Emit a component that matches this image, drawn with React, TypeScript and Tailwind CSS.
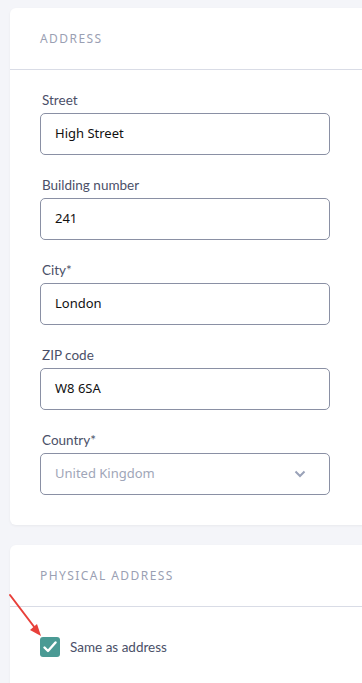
import React from 'react';

const labelFont = { fontFamily: "'Lato', 'Noto Sans', sans-serif" };
const inputFont = { fontFamily: "'Noto Sans', 'Open Sans', sans-serif" };

function Field({ label, value }: { label: string; value: string }) {
  return (
    <div className="flex flex-col">
      <label className="pl-[2px] text-[13.5px] leading-[16px] text-[#4b5068] mb-[5px]" style={labelFont}>
        {label}
      </label>
      <div
        className="w-[290px] h-[42px] rounded-[5px] border border-[#8a90a4] bg-white flex items-center px-[14px] text-[13px] text-[#111]"
        style={inputFont}
      >
        {value}
      </div>
    </div>
  );
}

function CardHeader({ title }: { title: string }) {
  return (
    <div className="h-[62px] border-b border-[#d9dce6] flex items-center px-[30px]">
      <span className="text-[12px] tracking-[0.12em] text-[#9aa0b3]" style={inputFont}>
        {title}
      </span>
    </div>
  );
}

export default function App() {
  return (
    <div className="relative w-[362px] h-[683px] overflow-hidden bg-[#f4f5f9]">
      <div className="pt-[8px] pl-[10px] flex flex-col gap-[20px]">
        <div className="w-[380px] bg-white rounded-[6px] shadow-[0_1px_3px_rgba(0,0,0,0.05)]">
          <CardHeader title="ADDRESS" />
          <div className="px-[30px] pt-[22px] pb-[30px] flex flex-col gap-[22px]">
            <Field label="Street" value="High Street" />
            <Field label="Building number" value="241" />
            <Field label="City*" value="London" />
            <Field label="ZIP code" value="W8 6SA" />
            <div className="flex flex-col">
              <label className="pl-[2px] text-[13.5px] leading-[16px] text-[#4b5068] mb-[5px]" style={labelFont}>
                Country*
              </label>
              <div
                className="w-[290px] h-[42px] rounded-[5px] border border-[#8a90a4] bg-white flex items-center justify-between px-[14px] text-[13px] text-[#a0a6b8]"
                style={inputFont}
              >
                <span>United Kingdom</span>
                <svg width="12" height="8" viewBox="0 0 12 8" className="mr-[9px]">
                  <path d="M1.5 1.5 L6 6 L10.5 1.5" fill="none" stroke="#9aa2b8" strokeWidth="2" />
                </svg>
              </div>
            </div>
          </div>
        </div>

        <div className="w-[380px] h-[200px] bg-white rounded-[6px] shadow-[0_1px_3px_rgba(0,0,0,0.05)]">
          <CardHeader title="PHYSICAL ADDRESS" />
          <div className="px-[30px] pt-[30px] flex items-center gap-[10px]">
            <div className="w-[20px] h-[20px] rounded-[3px] bg-[#4a9a94] flex items-center justify-center">
              <svg width="14" height="12" viewBox="0 0 14 12">
                <path d="M1.5 6.5 L5 10 L12.5 1.5" fill="none" stroke="#ffffff" strokeWidth="2.4" strokeLinecap="round" strokeLinejoin="round" />
              </svg>
            </div>
            <span className="text-[13.5px] text-[#4b5068]" style={labelFont}>
              Same as address
            </span>
          </div>
        </div>
      </div>

      <svg className="absolute left-0 top-0 pointer-events-none" width="60" height="683" viewBox="0 0 60 683">
        <line x1="10" y1="595" x2="35" y2="628" stroke="#e8403a" strokeWidth="2" strokeLinecap="round" />
        <path d="M41 636 L30 630 L37 624 Z" fill="#e8403a" />
      </svg>
    </div>
  );
}
